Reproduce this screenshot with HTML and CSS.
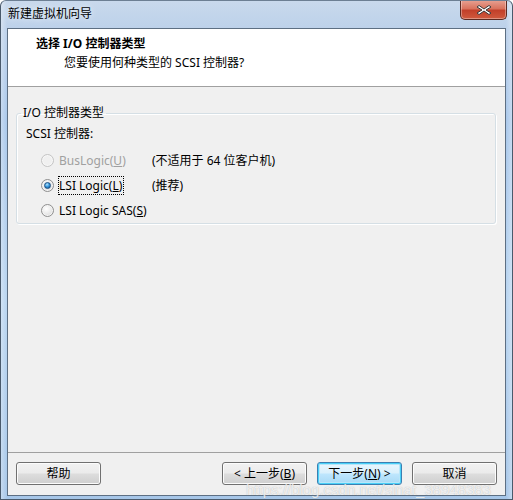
FILE: index.html
```html
<!DOCTYPE html>
<html lang="zh-CN">
<head>
<meta charset="utf-8">
<title>新建虚拟机向导</title>
<link rel="stylesheet" href="styles.css">
</head>
<body>
<div class="window">
  <div class="titlebar">
    <span class="title">新建虚拟机向导</span>
    <div class="close">
      <svg width="18" height="12" viewBox="0 0 18 12">
        <path d="M4 1.5 L9 5 L14 1.5 L16 3 L11 6 L16 9 L14 10.5 L9 7 L4 10.5 L2 9 L7 6 L2 3 Z" fill="#fff" stroke="#3a3a3a" stroke-width="1" stroke-linejoin="round"/>
      </svg>
    </div>
  </div>
  <div class="client">
    <div class="header">
      <div class="h-title">选择 I/O 控制器类型</div>
      <div class="h-sub">您要使用何种类型的 SCSI 控制器?</div>
    </div>
    <div class="main">
      <fieldset class="group">
        <legend class="legend">I/O 控制器类型</legend>
        <div class="caption">SCSI 控制器:</div>
        <div class="row disabled">
          <span class="radio"></span>
          <span class="label"><span class="text">BusLogic(<u>U</u>)</span></span>
          <span class="note">(不适用于 64 位客户机)</span>
        </div>
        <div class="row">
          <span class="radio checked"></span>
          <span class="label"><span class="text focus">LSI Logic(<u>L</u>)</span></span>
          <span class="note">(推荐)</span>
        </div>
        <div class="row">
          <span class="radio"></span>
          <span class="label"><span class="text">LSI Logic SAS(<u>S</u>)</span></span>
        </div>
      </fieldset>
    </div>
    <div class="footer">
      <button class="btn">帮助</button>
      <div class="spacer"></div>
      <button class="btn">&lt; 上一步(<u>B</u>)</button>
      <button class="btn default">下一步(<u>N</u>) &gt;</button>
      <button class="btn">取消</button>
    </div>
  </div>
  <div class="watermark">https://blog.csdn.net/sinat_38948383</div>
</div>
</body>
</html>
```

FILE: styles.css
```css
* { box-sizing: border-box; }
html, body { margin: 0; padding: 0; }
body {
  width: 513px;
  height: 500px;
  overflow: hidden;
  font-family: "Noto Sans", "Noto Sans CJK SC", sans-serif;
  font-size: 12px;
  color: #000;
  background: #fff;
}
.window {
  position: relative;
  width: 513px;
  height: 500px;
  display: flex;
  flex-direction: column;
  padding: 0 6px 3px 6px;
  border-radius: 6px 6px 0 0;
  border: 1px solid #4a5a6c;
  border-top-color: #6d7f93;
  overflow: hidden;
  background:
    linear-gradient(90deg, rgba(255,255,255,0.35), rgba(255,255,255,0) 6px, rgba(255,255,255,0) calc(100% - 6px), rgba(255,255,255,0.35)),
    linear-gradient(180deg, #c9d9ec 0px, #bcd1ea 28px, #a9c7ea 120px, #b8d4f0 300px, #a6c6e8 500px);
}
.titlebar {
  height: 27px;
  display: flex;
  align-items: center;
  justify-content: space-between;
  padding-left: 1px;
}
.title {
  font-size: 12px;
  line-height: 16px;
  margin-top: -1px;
  color: #000;
  text-shadow: 0 0 6px rgba(255,255,255,0.9);
}
.close {
  align-self: flex-start;
  margin-top: -1px;
  margin-right: -1px;
  width: 47px;
  height: 20px;
  border: 1px solid #5b2a22;
  border-top: none;
  border-radius: 0 0 5px 5px;
  background: linear-gradient(180deg, #e8a394 0%, #d9735e 45%, #c2402a 55%, #d05a3e 100%);
  box-shadow: inset 0 0 0 1px rgba(255,255,255,0.35);
  display: flex;
  align-items: center;
  justify-content: center;
}
.client {
  flex: 1;
  display: flex;
  flex-direction: column;
  background: #f0f0f0;
  border: 1px solid #5d6f83;
}
.header {
  height: 58px;
  background: #fff;
  border-bottom: 1px solid #a0a0a0;
  padding: 7px 0 0 28px;
}
.h-title {
  font-weight: bold;
  line-height: 16px;
}
.h-sub {
  margin-top: 3px;
  padding-left: 28px;
  line-height: 16px;
}
.main {
  flex: 1;
  padding: 18px 9px 0 8px;
}
.group {
  margin: 0;
  padding: 0 0 0 4px;
  border: 1px solid #d5dfe5;
  border-radius: 3px;
  box-shadow: 1px 1px 0 #fff, inset 1px 1px 0 #fff;
  min-inline-size: 0;
}
.legend {
  padding: 0 2px;
  line-height: 16px;
}
.caption {
  margin-top: 5px;
  margin-left: 5px;
  line-height: 16px;
  height: 16px;
}
.caption + .row { margin-top: 6px; }
.row {
  height: 25px;
  display: flex;
  align-items: center;
  padding-left: 20px;
}
.radio {
  width: 13px;
  height: 13px;
  border-radius: 50%;
  border: 1px solid #8f8f8f;
  background: radial-gradient(circle at 40% 35%, #ffffff 0%, #ececec 45%, #d0d0d0 100%);
  box-shadow: inset 0 0 0 1px #f4f4f4;
  position: relative;
  flex: none;
}
.radio.checked::after {
  content: "";
  position: absolute;
  left: 2px;
  top: 2px;
  width: 7px;
  height: 7px;
  border-radius: 50%;
  background: radial-gradient(circle at 40% 30%, #b6e4fb 0%, #3c9be0 45%, #114c85 100%);
  border: 1px solid #1b4f82;
  box-sizing: border-box;
}
.label {
  margin-left: 5px;
  width: 93px;
  flex: none;
  line-height: 16px;
  white-space: nowrap;
}
.text.focus {
  outline: 1px dotted #000;
  outline-offset: 0;
  padding-right: 1px;
}
.note {
  line-height: 16px;
  white-space: nowrap;
}
.disabled .label { color: #a0a0a0; }
.disabled .radio {
  border-color: #c4c4c4;
  background: #f0f0f0;
  box-shadow: inset 0 0 0 1px #f7f7f7;
}
.footer {
  height: 43px;
  border-top: 1px solid #a0a0a0;
  display: flex;
  align-items: flex-start;
  padding: 9px 8px 0 8px;
  gap: 10px;
}
.spacer { flex: 1; }
.btn {
  width: 85px;
  height: 23px;
  font-family: inherit;
  font-size: 12px;
  color: #000;
  padding: 0;
  border: 1px solid #707070;
  border-radius: 3px;
  background: linear-gradient(180deg, #f2f2f2 0%, #ebebeb 48%, #dddddd 52%, #cfcfcf 100%);
  box-shadow: inset 0 0 0 1px #fcfcfc;
  line-height: 19px;
}
.btn.default {
  border-color: #3c7fb1;
  box-shadow: inset 0 0 0 1px #48d0f8, inset 0 0 0 2px #b8e6f9;
  background: linear-gradient(180deg, #eaf6fd 0%, #d9f0fc 48%, #bee6fd 52%, #a7d9f5 100%);
}
.watermark {
  position: absolute;
  left: 245px;
  top: 480px;
  font-family: "Liberation Sans", sans-serif;
  font-size: 15px;
  color: rgba(255,255,255,0.75);
  text-shadow: 0 0 1px rgba(150,150,150,0.7);
  white-space: nowrap;
  pointer-events: none;
}
```
